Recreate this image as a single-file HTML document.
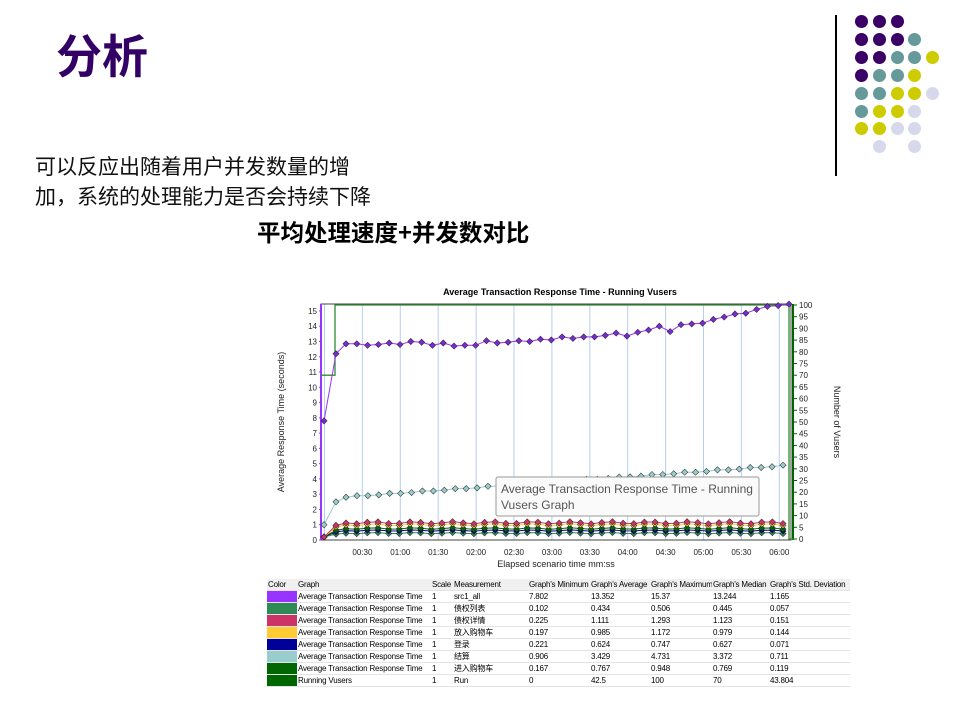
<!DOCTYPE html>
<html><head><meta charset="utf-8"><style>
body{margin:0;width:960px;height:720px;background:#fff;position:relative;overflow:hidden;font-family:"Liberation Sans","Noto Sans CJK SC",sans-serif}
.t{position:absolute;white-space:nowrap}
.dot{position:absolute;width:13px;height:13px;border-radius:50%}
table{position:absolute;left:267px;top:579px;border-collapse:collapse;font-size:8px;letter-spacing:-0.2px;font-family:"Liberation Sans","Noto Sans CJK SC",sans-serif;color:#000;table-layout:fixed;width:583px}
td{height:11px;padding:0 1px;border-bottom:1px solid #e4e4e4;white-space:nowrap;overflow:hidden;line-height:11px}
tr:first-child td{background:#f0f0f0}
.sw{padding:0}
</style></head><body>
<div class="t" style="left:56px;top:26px;font-size:46px;font-weight:bold;color:#330066;font-family:'Noto Sans CJK SC',sans-serif;line-height:56px">分析</div>
<div class="t" style="left:35px;top:151px;font-size:21px;line-height:30px;color:#111;font-family:'Noto Sans CJK SC',sans-serif">可以反应出随着用户并发数量的增<br>加，系统的处理能力是否会持续下降</div>
<div class="t" style="left:257px;top:216px;font-size:23.5px;font-weight:bold;line-height:30px;color:#000;font-family:'Noto Sans CJK SC',sans-serif">平均处理速度+并发数对比</div>
<div style="position:absolute;left:835px;top:15px;width:1.5px;height:161px;background:#000"></div>
<div id="dots"></div>
<svg id="ch" width="960" height="720" style="position:absolute;left:0;top:0" font-family="Liberation Sans,sans-serif"></svg>
<table>
<colgroup><col style="width:30px"><col style="width:134px"><col style="width:22px"><col style="width:75px"><col style="width:62px"><col style="width:60px"><col style="width:62px"><col style="width:57px"><col style="width:81px"></colgroup>
<tr><td>Color</td><td>Graph</td><td>Scale</td><td>Measurement</td><td>Graph's Minimum</td><td>Graph's Average</td><td>Graph's Maximum</td><td>Graph's Median</td><td>Graph's Std. Deviation</td></tr>
<tr><td class="sw" style="background:#9933ff"></td><td>Average Transaction Response Time</td><td>1</td><td>src1_all</td><td>7.802</td><td>13.352</td><td>15.37</td><td>13.244</td><td>1.165</td></tr>
<tr><td class="sw" style="background:#2e8b57"></td><td>Average Transaction Response Time</td><td>1</td><td>债权列表</td><td>0.102</td><td>0.434</td><td>0.506</td><td>0.445</td><td>0.057</td></tr>
<tr><td class="sw" style="background:#cc3366"></td><td>Average Transaction Response Time</td><td>1</td><td>债权详情</td><td>0.225</td><td>1.111</td><td>1.293</td><td>1.123</td><td>0.151</td></tr>
<tr><td class="sw" style="background:#ffcc33"></td><td>Average Transaction Response Time</td><td>1</td><td>放入购物车</td><td>0.197</td><td>0.985</td><td>1.172</td><td>0.979</td><td>0.144</td></tr>
<tr><td class="sw" style="background:#000099"></td><td>Average Transaction Response Time</td><td>1</td><td>登录</td><td>0.221</td><td>0.624</td><td>0.747</td><td>0.627</td><td>0.071</td></tr>
<tr><td class="sw" style="background:#99cccc"></td><td>Average Transaction Response Time</td><td>1</td><td>结算</td><td>0.906</td><td>3.429</td><td>4.731</td><td>3.372</td><td>0.711</td></tr>
<tr><td class="sw" style="background:#006600"></td><td>Average Transaction Response Time</td><td>1</td><td>进入购物车</td><td>0.167</td><td>0.767</td><td>0.948</td><td>0.769</td><td>0.119</td></tr>
<tr><td class="sw" style="background:#006600"></td><td>Running Vusers</td><td>1</td><td>Run</td><td>0</td><td>42.5</td><td>100</td><td>70</td><td>43.804</td></tr>
</table>
<script>
var P='#3a0066',T='#669999',Y='#cccc00',L='#d8d8ec';
var rows=[[P,P,P],[P,P,P,T],[P,P,T,T,Y],[P,T,T,Y],[T,T,Y,Y,L],[T,Y,Y,L],[Y,Y,L,L],[0,L,0,L]];
var h='';rows.forEach(function(r,i){r.forEach(function(c,j){if(c)h+='<div class="dot" style="left:'+(855+j*17.8)+'px;top:'+(15+i*17.9)+'px;background:'+c+'"></div>';});});
document.getElementById('dots').innerHTML=h;
var s='';
function yv(v){return 540-v*15.27;}
function yr(v){return 539-v*2.34;}
s+='<text x="560" y="295" font-size="9" font-weight="bold" text-anchor="middle">Average Transaction Response Time - Running Vusers</text>';
for(var k=0;k<13;k++){var x=324.5+37.9*k;s+='<line x1="'+x+'" y1="304" x2="'+x+'" y2="540" stroke="#b8cef0" stroke-width="1"/>';}
for(var k=1;k<=12;k++){var m=k*30;var lab=('0'+Math.floor(m/60)).slice(-2)+':'+('0'+m%60).slice(-2);s+='<text x="'+(324.5+37.9*k)+'" y="555" font-size="8" text-anchor="middle" fill="#222">'+lab+'</text>';}
s+='<text x="556" y="567" font-size="9" text-anchor="middle" fill="#222">Elapsed scenario time mm:ss</text>';
for(var v=0;v<=15;v++){s+='<text x="317" y="'+(yv(v)+3)+'" font-size="8" text-anchor="end" fill="#222">'+v+'</text>';s+='<line x1="319" x2="322" y1="'+yv(v)+'" y2="'+yv(v)+'" stroke="#9933ff"/>';}
for(var v=0;v<=100;v+=5){s+='<text x="799" y="'+(yr(v)+3)+'" font-size="8" fill="#222">'+v+'</text>';s+='<line x1="794" x2="797" y1="'+yr(v)+'" y2="'+yr(v)+'" stroke="#060"/>';}
s+='<text transform="translate(284,422) rotate(-90)" font-size="9" text-anchor="middle" fill="#222">Average Response Time (seconds)</text>';
s+='<text transform="translate(834,422) rotate(90)" font-size="9" text-anchor="middle" fill="#222">Number of Vusers</text>';
s+='<rect x="321" y="304" width="470" height="236" fill="none" stroke="#444"/>';
s+='<line x1="321" y1="304" x2="321" y2="540" stroke="#9933ff" stroke-width="2"/>';
s+='<line x1="793" y1="304" x2="793" y2="540" stroke="#060" stroke-width="2"/>';
s+='<polyline fill="none" stroke="#2e8b2e" stroke-width="1.3" points="321,'+yr(70)+' 335,'+yr(70)+' 335,'+yr(100)+' 789,'+yr(100)+' 789,'+yr(0)+' 797,'+yr(0)+'"/>';
function series(vals,col,mk,x0,x1){var pts=[];vals.forEach(function(v,i){var x=i==0?324:(i==1?336:346+(i-2)*(x1-346)/(vals.length-3));pts.push([x,yv(v)]);});
var r='<polyline fill="none" stroke="'+col+'" stroke-width="1" points="'+pts.map(function(p){return p.join(',')}).join(' ')+'"/>';
pts.forEach(function(p){r+='<rect x="'+(p[0]-2.2)+'" y="'+(p[1]-2.2)+'" width="4.4" height="4.4" transform="rotate(45 '+p[0]+' '+p[1]+')" fill="'+mk+'" stroke="#222" stroke-width="0.5"/>';});return r;}
var pv=[7.8,12.2,12.85,12.85,12.75,12.8,12.9,12.8,13.0,12.95,12.75,12.9,12.7,12.75,12.75,13.05,12.9,12.95,13.05,13.0,13.15,13.1,13.3,13.2,13.3,13.3,13.4,13.55,13.35,13.6,13.75,14.0,13.65,14.1,14.15,14.2,14.45,14.6,14.8,14.85,15.1,15.3,15.35,15.45];
var tv=[1,2.5];for(var i=2;i<43;i++)tv.push(2.8+(i-2)/40*2.05+(i%3==0?0.05:0));
function flat(b,amp){var a=[0.2,b*0.85];for(var i=2;i<44;i++)a.push(b+Math.sin(i*1.7)*amp);return a;}
s+=series(flat(0.45,0.04),'#2e8b57','#2e8b57',0,783);
s+=series(flat(0.62,0.04),'#000099','#000099',0,783);
s+=series(flat(0.75,0.05),'#006600','#006600',0,783);
s+=series(flat(1.0,0.07),'#ffcc33','#ffcc33',0,783);
s+=series(flat(1.13,0.07),'#cc3366','#cc3366',0,783);
s+=series(tv,'#99cccc','#99cccc',0,783);
s+=series(pv,'#9933ff','#7a2ad0',0,789);
s+='<rect x="496" y="477" width="263" height="39" fill="#fafafa" stroke="#999" rx="2"/>';
s+='<text x="501" y="493" font-size="12" fill="#555">Average Transaction Response Time - Running</text>';
s+='<text x="501" y="509" font-size="12" fill="#555">Vusers Graph</text>';
document.getElementById('ch').innerHTML=s;
</script>
</body></html>
